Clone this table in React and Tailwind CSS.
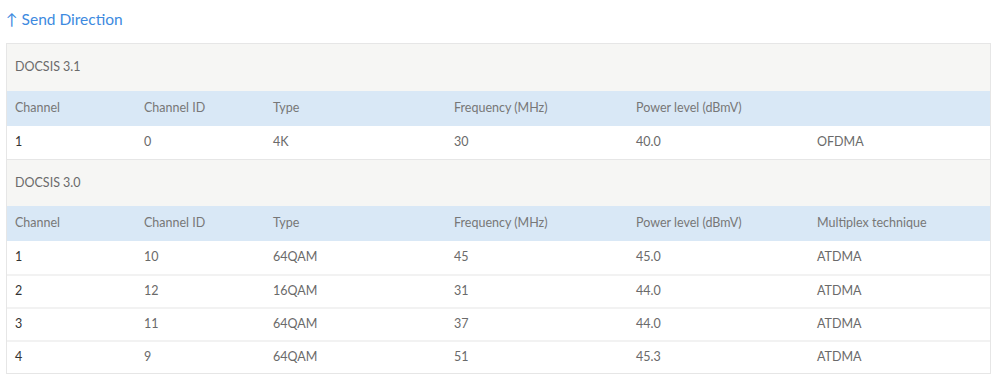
const sections = [
  {
    title: 'DOCSIS 3.1',
    lastHeader: '',
    rows: [['1', '0', '4K', '30', '40.0', 'OFDMA']],
  },
  {
    title: 'DOCSIS 3.0',
    lastHeader: 'Multiplex technique',
    rows: [
      ['1', '10', '64QAM', '45', '45.0', 'ATDMA'],
      ['2', '12', '16QAM', '31', '44.0', 'ATDMA'],
      ['3', '11', '64QAM', '37', '44.0', 'ATDMA'],
      ['4', '9', '64QAM', '51', '45.3', 'ATDMA'],
    ],
  },
];

const cols = 'grid grid-cols-[129px_129px_181px_182px_181px_1fr]';

export default function App() {
  return (
    <div className="w-[998px] h-[379px] bg-white pl-[6px] pr-[7px] pt-[8px] font-['Lato','Open_Sans',sans-serif] text-[12.5px]">
      <h2 className="text-[15.5px] text-[#3d8ae0] leading-[22px] mb-[13px]">↑ Send Direction</h2>
      <div className="border border-[#e6e6e6]">
        {sections.map((s, si) => (
          <div key={s.title}>
            <div className={`h-[47px] flex items-center pl-[8px] bg-[#f6f6f4] text-[#6a6a6a] ${si > 0 ? 'border-t border-[#e6e6e6]' : ''}`}>
              {s.title}
            </div>
            <div className={`${cols} h-[35px] items-center bg-[#d9e8f6] text-[#777]`}>
              {['Channel', 'Channel ID', 'Type', 'Frequency (MHz)', 'Power level (dBmV)', s.lastHeader].map((h, i) => (
                <div key={i} className="pl-[8px]">{h}</div>
              ))}
            </div>
            {s.rows.map((r, ri) => (
              <div key={ri} className={`${cols} h-[33px] items-center text-[#6a6a6a] ${ri > 0 ? 'border-t-2 border-[#f2f2f2]' : ''}`}>
                {r.map((c, ci) => (
                  <div key={ci} className={`pl-[8px] ${ci === 0 ? 'text-[#333]' : ''}`}>{c}</div>
                ))}
              </div>
            ))}
          </div>
        ))}
      </div>
    </div>
  );
}
